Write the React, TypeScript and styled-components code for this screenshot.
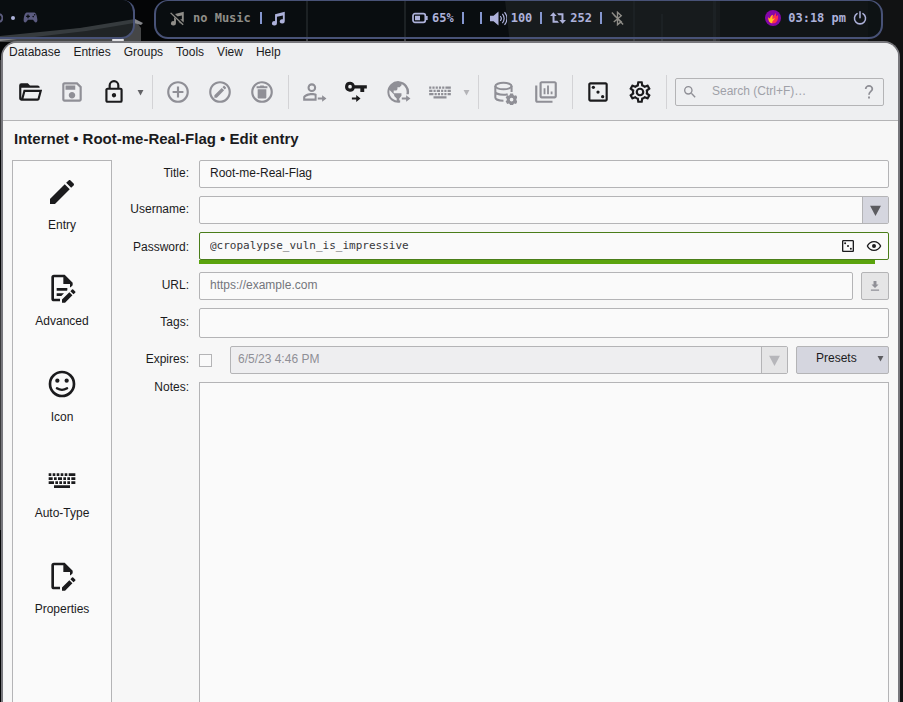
import React, { useState } from "react";
import styled, { createGlobalStyle } from "styled-components";

const ink = "#1b1b1d";
const dim = "#8f8f96";
const line = "#b4b4b6";
const face = "#d5d6df";
const bar = "#eeeff1";
const lilac = "#adb1da";

const Global = createGlobalStyle`
  * { box-sizing: border-box; }
  body {
    margin: 0;
    overflow: hidden;
    background: #0a0b0d;
    color: ${ink};
    font: 12px/16px "Liberation Sans", Arial, sans-serif;
  }
  button, input, textarea { font: inherit; color: inherit; margin: 0; }
`;

/* ---------- icons ---------- */

const ring =
  "M12,20C7.59,20 4,16.41 4,12C4,7.59 7.59,4 12,4C16.41,4 20,7.59 20,12C20,16.41 16.41,20 12,20M12,2A10,10 0 0,0 2,12A10,10 0 0,0 12,22A10,10 0 0,0 22,12A10,10 0 0,0 12,2";
const smallArrow = "M15.5 17.1h4v-2.2l4 3.1-4 3.1v-2.2h-4z";

const icons: Record<string, React.ReactNode> = {
  open: <path d="M6.1,10L4,18V8H21A2,2 0 0,0 19,6H12L10,4H4A2,2 0 0,0 2,6V18A2,2 0 0,0 4,20H19C19.9,20 20.7,19.4 20.9,18.5L23.2,10H6.1M19,18H6L7.6,12H20.6L19,18Z" />,
  save: <path d="M17 3H5C3.89 3 3 3.9 3 5V19C3 20.1 3.89 21 5 21H19C20.1 21 21 20.1 21 19V7L17 3M19 19H5V5H16.17L19 7.83V19M12 12C10.34 12 9 13.34 9 15S10.34 18 12 18 15 16.66 15 15 13.66 12 12 12M6 6H15V10H6V6Z" />,
  lock: <path d="M12,17C10.89,17 10,16.1 10,15C10,13.89 10.89,13 12,13A2,2 0 0,1 14,15A2,2 0 0,1 12,17M18,20V10H6V20H18M18,8A2,2 0 0,1 20,10V20A2,2 0 0,1 18,22H6C4.89,22 4,21.1 4,20V10C4,8.89 4.89,8 6,8H7V6A5,5 0 0,1 12,1A5,5 0 0,1 17,6V8H18M12,3A3,3 0 0,0 9,6V8H15V6A3,3 0 0,0 12,3Z" />,
  add: <path d={ring + "M13,7H11V11H7V13H11V17H13V13H17V11H13V7Z"} />,
  edit: <path d={ring + "M15.7,6.3C15.9,6.3 16.1,6.4 16.2,6.5L17.5,7.8C17.7,8 17.7,8.4 17.5,8.6L16.4,9.7L14.3,7.600L15.3,6.500C15.4,6.400 15.6,6.300 15.7,6.300M13.600,8.200L15.800,10.400L9.100,17.200H6.800V14.900L13.600,8.200Z"} />,
  trash: <path d={ring + "M8 9.5H16V17A1 1 0 0 1 15 18H9A1 1 0 0 1 8 17ZM7 6.8H9.8L10.5 6H13.5L14.2 6.8H17V8.6H7Z"} />,
  user: (
    <>
      <path d="M10 4a4 4 0 1 0 0 8 4 4 0 0 0 0-8m0 1.9a2.1 2.1 0 1 1 0 4.2 2.1 2.1 0 0 1 0-4.2" />
      <path d="M10 13c-2.67 0-8 1.34-8 4v3h12.4v-6.1C13.2 13.3 11.4 13 10 13m0 1.900c.9 0 1.800.1 2.600.4v2.800H3.900V17c0-.64 3.130-2.100 6.100-2.100" fillRule="evenodd" />
      <path d={smallArrow} />
    </>
  ),
  key: (
    <>
      <path d="M6.5 2.500a4.600 4.600 0 1 0 4.300 6.200H16V12h3.600V8.700H22V5.800H10.800A4.600 4.600 0 0 0 6.500 2.500m0 2.900a1.700 1.700 0 1 1 0 3.400 1.700 1.700 0 0 1 0-3.400" />
      <path d="M8.200 17h4v-2.300l4 3.300-4 3.300V19h-4z" />
    </>
  ),
  globe: (
    <>
      <path d="M22 14A10 10 0 1 0 14 21.800V19.700A8 8 0 0 1 4 12c0-.7.100-1.300.2-1.900L8.500 14.500v1.300l2.300 2.200v3h2.400v-3l2-2.500v-2.300H8V10.500h2.500l1-1V7.500h2l1.800-1.800V4.700A8 8 0 0 1 19.700 14z" />
      <path d={smallArrow} />
    </>
  ),
  keyboard: (
    <path d="M2 7h2v2H2zM5 7h2v2H5zM8 7h2v2H8zM11 7h2v2h-2zM14 7h2v2h-2zM17 7h5v2h-5zM2 10h3v2H2zM6 10h2v2H6zM9 10h3v2H9zM13 10h2v2h-2zM16 10h2v2h-2zM19 10h3v2h-3zM2 13h4v2H2zM7 13h2v2H7zM10 13h2v2h-2zM13 13h2v2h-2zM16 13h2v2h-2zM19 13h3v2h-3zM6 16h12v2H6z" />
  ),
  database: (
    <>
      <g fill="none" stroke="currentColor" strokeWidth="1.900">
        <ellipse cx="11.500" cy="6.500" rx="7.500" ry="3" />
        <path d="M4 6.500v10.500c0 1.700 3.300 3 7.500 3M19 6.500v5.500M4 11.500c0 1.700 3.300 3 7.500 3 1.500 0 2.800-.2 3.900-.5" />
      </g>
      <path fillRule="evenodd" d="M17.600 13.300h2.800l.3 1.500 1 .6 1.400-.5 1.400 2.400-1.100 1v1.300l1.100 1-1.400 2.400-1.400-.5-1 .6-.3 1.500h-2.800l-.3-1.500-1-.6-1.400.5-1.400-2.400 1.100-1v-1.300l-1.100-1 1.400-2.400 1.400.5 1-.6zM19 17.300a1.700 1.700 0 1 0 0 3.400 1.700 1.700 0 0 0 0-3.400" />
    </>
  ),
  reports: (
    <path d="M20 2H8C6.900 2 6 2.900 6 4V16C6 17.100 6.900 18 8 18H20C21.100 18 22 17.100 22 16V4C22 2.900 21.100 2 20 2M20 16H8V4H20V16M4 6H2V20C2 21.100 2.900 22 4 22H18V20H4V6M9.800 8.500H11.500V14H9.800ZM13 6H14.700V14H13ZM16.300 11.500H18V14H16.300Z" />
  ),
  dice: (
    <>
      <path d="M19 5V19H5V5H19M19 3H5C3.900 3 3 3.900 3 5V19C3 20.100 3.900 21 5 21H19C20.100 21 21 20.100 21 19V5C21 3.900 20.100 3 19 3" />
      <circle cx="7.700" cy="7.700" r="1.500" />
      <circle cx="12" cy="12" r="1.500" />
      <circle cx="16.300" cy="16.300" r="1.500" />
    </>
  ),
  settings: (
    <path d="M12,8A4,4 0 0,1 16,12A4,4 0 0,1 12,16A4,4 0 0,1 8,12A4,4 0 0,1 12,8M12,10A2,2 0 0,0 10,12A2,2 0 0,0 12,14A2,2 0 0,0 14,12A2,2 0 0,0 12,10M10,22C9.75,22 9.54,21.82 9.5,21.58L9.13,18.93C8.5,18.68 7.96,18.34 7.44,17.94L4.95,18.95C4.73,19.03 4.46,18.95 4.34,18.73L2.34,15.27C2.21,15.05 2.27,14.78 2.46,14.63L4.57,12.97L4.5,12L4.57,11L2.46,9.37C2.27,9.22 2.21,8.95 2.34,8.73L4.34,5.27C4.46,5.05 4.73,4.96 4.95,5.05L7.44,6.05C7.96,5.66 8.5,5.32 9.13,5.07L9.5,2.42C9.54,2.18 9.75,2 10,2H14C14.25,2 14.46,2.18 14.5,2.42L14.87,5.07C15.5,5.32 16.04,5.66 16.56,6.05L19.05,5.05C19.27,4.96 19.54,5.05 19.66,5.27L21.66,8.73C21.79,8.95 21.73,9.22 21.54,9.37L19.43,11L19.5,12L19.43,13L21.54,14.63C21.73,14.78 21.79,15.05 21.66,15.27L19.66,18.73C19.54,18.95 19.27,19.04 19.05,18.95L16.56,17.95C16.04,18.34 15.5,18.68 14.87,18.93L14.5,21.58C14.46,21.82 14.25,22 14,22H10M11.25,4L10.88,6.61C9.68,6.86 8.62,7.5 7.85,8.39L5.44,7.35L4.69,8.65L6.8,10.2C6.4,11.37 6.4,12.64 6.8,13.8L4.68,15.36L5.43,16.66L7.86,15.62C8.63,16.5 9.68,17.14 10.87,17.38L11.24,20H12.76L13.13,17.39C14.32,17.14 15.37,16.5 16.14,15.62L18.57,16.66L19.32,15.36L17.2,13.81C17.6,12.64 17.6,11.37 17.2,10.2L19.31,8.65L18.56,7.35L16.15,8.39C15.38,7.5 14.32,6.86 13.12,6.62L12.75,4H11.25Z" />
  ),
  search: <path d="M9.5,3A6.5,6.5 0 0,1 16,9.5C16,11.11 15.41,12.59 14.44,13.73L14.71,14H15.5L20.5,19L19,20.5L14,15.5V14.71L13.73,14.44C12.59,15.41 11.11,16 9.5,16A6.5,6.5 0 0,1 3,9.5A6.5,6.5 0 0,1 9.5,3M9.5,5C7,5 5,7 5,9.5C5,12 7,14 9.5,14C12,14 14,12 14,9.5C14,7 12,5 9.5,5Z" />,
  help: (
    <>
      <path d="M7 7.500a5 4.700 0 1 1 10 0c0 3.500-5 4-5 8.500" fill="none" stroke="currentColor" strokeWidth="2.600" />
      <path d="M10.600 18.800h2.800v2.800h-2.800z" />
    </>
  ),
  pencil: <path d="M20.71,7.04C21.1,6.65 21.1,6 20.71,5.63L18.37,3.29C18,2.9 17.35,2.9 16.96,3.29L15.12,5.12L18.87,8.87M3,17.25V21H6.75L17.81,9.93L14.06,6.18L3,17.25Z" />,
  document: (
    <>
      <path d="M6 2a2 2 0 0 0-2 2v16a2 2 0 0 0 2 2h4.500v-2H6V4h7v5h5v2.500h.5L20 10V8l-6-6z" />
      <path d="M8 12h8v1.600l-.4.400H8zM8 16h5.500l-2 2H8z" />
      <path d="M12 20.700V23h2.300l5.500-5.500-2.300-2.300zM18.300 14.400l2.300 2.300 1.300-1.200a.6.600 0 0 0 0-.9l-1.500-1.500a.6.600 0 0 0-.9 0z" />
    </>
  ),
  properties: (
    <>
      <path d="M6 2a2 2 0 0 0-2 2v16a2 2 0 0 0 2 2h4.500v-2H6V4h7v5h5v2.500h.5L20 10V8l-6-6z" />
      <path d="M12 20.700V23h2.300l5.500-5.500-2.300-2.300zM18.300 14.400l2.300 2.300 1.300-1.200a.6.600 0 0 0 0-.9l-1.500-1.500a.6.600 0 0 0-.9 0z" />
    </>
  ),
  smile: (
    <>
      <path d={ring} />
      <circle cx="8.500" cy="9.500" r="1.600" />
      <circle cx="15.500" cy="9.500" r="1.600" />
      <path d="M8.200 15.200q3.800 2.400 7.600 0" fill="none" stroke="currentColor" strokeWidth="1.800" strokeLinecap="round" />
    </>
  ),
  eye: <path d="M12,9A3,3 0 0,1 15,12A3,3 0 0,1 12,15A3,3 0 0,1 9,12A3,3 0 0,1 12,9M12,4.5C17,4.5 21.27,7.61 23,12C21.27,16.39 17,19.5 12,19.5C7,19.5 2.73,16.39 1,12C2.73,7.61 7,4.5 12,4.5M3.18,12C4.83,15.36 8.24,17.5 12,17.5C15.76,17.5 19.17,15.36 20.82,12C19.17,8.64 15.76,6.5 12,6.5C8.24,6.5 4.83,8.64 3.18,12Z" />,
  download: <path d="M18 9.500h-3.500V3.500h-5v6H6l6 6zM5 18v2h14v-2z" />,
  down: <path d="M2 3h20L12 22z" />,
  note: <path d="M22 1v15.500a4 3.500 0 1 1-3-3.300V7L9.500 9.200v10.300a4 3.500 0 1 1-3-3.300V5z" />,
  noteOff: (
    <>
      <path d="M22 1v15.500a4 3.500 0 1 1-3-3.300V7L9.500 9.200v10.300a4 3.500 0 1 1-3-3.300V5z" />
      <path d="M2 2l20 20" stroke="#0d1013" strokeWidth="4.500" />
      <path d="M1 3l20 19" stroke="currentColor" strokeWidth="2.200" />
    </>
  ),
  battery: (
    <>
      <rect x="1.500" y="5.500" width="18.500" height="13" rx="3" fill="none" stroke="currentColor" strokeWidth="2.600" />
      <path d="M4.500 8.500h7.500v7H4.500zM20.500 9h3v6h-3z" />
    </>
  ),
  volume: (
    <>
      <path d="M0 8h5l7-6v20l-7-6H0z" />
      <path d="M14.500 8.500q3 3.500 0 7M17.500 5.500q5 6.500 0 13M20.500 3q7 9 0 18" fill="none" stroke="currentColor" strokeWidth="1.700" />
    </>
  ),
  loop: <path d="M5 3.500l5 5.500H6.800v7H11l2.500 3H3.800V9H0zM19 20.500L14 15h3.200V8H13l-2.500-3h9.700v10H24z" />,
  bluetoothOff: (
    <path d="M6 6.500l12 10.500-6 5V2l6 5.500L6 17.500M3 2.500l18 19" fill="none" stroke="currentColor" strokeWidth="2.200" />
  ),
  power: (
    <path d="M7 4.500a9.500 9.500 0 1 0 10 0M12 1.500v10" fill="none" stroke="currentColor" strokeWidth="2.600" strokeLinecap="round" />
  ),
  gamepad: (
    <path fillRule="evenodd" d="M6 4h12c3 0 4.500 6 5 12 .2 4-3 5-4.800 2.500L16 15.500H8l-2.200 3C4 21 .8 20 1 16 1.500 10 3 4 6 4M7 7v2H5v2h2v2h2v-2h2V9H9V7zM15 10.500a1.300 1.300 0 1 0 2.600 0 1.300 1.300 0 0 0-2.600 0M17.500 7.700a1.200 1.200 0 1 0 2.400 0 1.200 1.200 0 0 0-2.400 0" />
  ),
  flame: (
    <>
      <circle cx="12" cy="12" r="12" fill="#8606a8" />
      <path d="M5 11c0 8 4 9 7.500 9 4 0 8-4 7-13-1 1.500-2 2-3 2.500.5-2.500 0-4-1-5-.5 3-3 4-4.500 7-.5-1.500 0-3 .5-4.500-3 1.500-4 3.500-4 6-1-.5-2-1-2.500-2" fill="#ff2e4d" />
      <path d="M5 11c0 7 3 9 6 9-1-3 2-4 4-8-2 1-3.500 1-4 2 0-2.500.5-4.500 1-7-3 1.500-4 3.500-4.500 6-1-.5-2-1-2.500-2" fill="#ffc01e" />
    </>
  ),
};

const Svg = styled.svg`
  display: block;
  flex: none;
  fill: currentColor;
`;

function Icon({ name, size = 26 }: { name: string; size?: number }) {
  return (
    <Svg width={size} height={size} viewBox="0 0 24 24" aria-hidden="true">
      {icons[name]}
    </Svg>
  );
}

/* ---------- desktop ---------- */

const Desktop = styled.div`
  position: relative;
  display: flex;
  flex-direction: column;
  height: 100vh;
`;

const Wallpaper = styled.svg`
  position: absolute;
  inset: 0;
  width: 100%;
  height: 100%;
`;

const StatusBar = styled.header`
  position: relative;
  display: grid;
  grid-template-columns: 135px 1fr;
  column-gap: 19px;
  height: 39px;
  margin: 0 20px 2px 0;
  color: ${lilac};
  font: bold 12px/16px "DejaVu Sans Mono", monospace;
`;

const Pill = styled.div<{ $left?: boolean }>`
  display: ${(p) => (p.$left ? "flex" : "grid")};
  grid-template-columns: 1fr auto 1fr;
  align-items: center;
  gap: 8px;
  padding: ${(p) => (p.$left ? "0 0 2px" : "0 14px 2px")};
  border: 2px solid #485277;
  border-width: ${(p) => (p.$left ? "0 2px 2px 0" : "1px 2px 2px")};
  border-radius: ${(p) => (p.$left ? "0 12px 14px 0" : "14px")};
  background: rgba(13, 18, 22, 0.65);
`;

const StatusGroup = styled.div<{ $end?: boolean; $gap?: number }>`
  display: flex;
  align-items: center;
  justify-content: ${(p) => (p.$end ? "flex-end" : "flex-start")};
  gap: ${(p) => p.$gap ?? 7}px;
`;

const Status = styled.span<{ $tone?: string }>`
  display: flex;
  align-items: center;
  gap: 4px;
  color: ${(p) => p.$tone ?? "inherit"};
`;

const Tick = styled.span`
  width: 2px;
  height: 12px;
  margin: 0 1px;
  background: #8596cf;
`;

const BarButton = styled.button`
  padding: 0;
  border: 0;
  background: none;
  color: inherit;
`;

/* ---------- application window ---------- */

const Window = styled.div`
  position: relative;
  flex: 1;
  min-height: 0;
  display: flex;
  flex-direction: column;
  margin: 0 3px 0 1px;
  border: 2px solid #77777c;
  border-bottom: 0;
  border-radius: 16px 16px 0 0;
  background: #f7f7f7;
  overflow: hidden;
`;

const Menu = styled.nav`
  display: flex;
  gap: 13px;
  padding: 1px 6px 4px;
  background: ${bar};
`;

const MenuItem = styled.button`
  padding: 0;
  border: 0;
  background: none;
`;

const Toolbar = styled.div`
  display: flex;
  align-items: center;
  height: 57px;
  padding: 0 14px 0 6px;
  border-bottom: 1px solid ${line};
  background: ${bar};
`;

const ToolButton = styled.button<{ $off?: boolean }>`
  display: flex;
  align-items: center;
  height: 42px;
  padding: 0 8px;
  border: 0;
  background: none;
  color: ${(p) => (p.$off ? dim : ink)};
`;

const MenuArrow = styled.button<{ $off?: boolean }>`
  display: flex;
  justify-content: flex-start;
  width: 12px;
  padding: 0 2px;
  border: 0;
  background: none;
  color: ${(p) => (p.$off ? "#b4b4b8" : "#626266")};
`;

const Separator = styled.span`
  width: 1px;
  height: 34px;
  margin: 0 4px 0 5px;
  background: #d3d3d6;
`;

const SearchBox = styled.label`
  flex: 1;
  min-width: 0;
  display: flex;
  align-items: center;
  height: 28px;
  margin-left: 4px;
  padding: 0 6px;
  border: 1px solid ${line};
  border-radius: 2px;
  color: ${dim};
`;

const SearchInput = styled.input`
  flex: 1;
  min-width: 0;
  padding: 0 0 2px;
  margin-left: 14px;
  border: 0;
  outline: 0;
  background: none;
  color: ${ink};
  &::placeholder { color: #9fa1a8; opacity: 1; }
`;

const Heading = styled.h1`
  margin: 0;
  padding: 8px 11px 11px;
  font-size: 15px;
  line-height: 20px;
`;

const Main = styled.main`
  flex: 1;
  min-height: 0;
  display: grid;
  grid-template-columns: 100px 1fr;
  column-gap: 16px;
  padding: 0 9px;
`;

const Tabs = styled.nav`
  border: 1px solid ${line};
  border-bottom: 0;
  background: #fafafa;
`;

const Tab = styled.button`
  display: flex;
  flex-direction: column;
  align-items: center;
  gap: 9px;
  width: 100%;
  height: 96px;
  padding: 15px 0 0;
  border: 0;
  background: none;
`;

const Form = styled.form`
  display: grid;
  grid-template-columns: 61px minmax(0, 1fr);
  grid-template-rows: repeat(6, auto) 1fr;
  gap: 8px 10px;
  min-height: 0;
`;

const Label = styled.label<{ $top?: number }>`
  margin-top: ${(p) => p.$top ?? 5}px;
  text-align: right;
`;

const Line = styled.div`
  display: flex;
  align-items: center;
  gap: 8px;
`;

const Box = styled.div<{ $tone?: "good" | "off"; $tall?: boolean }>`
  flex: 1;
  min-width: 0;
  display: flex;
  align-items: stretch;
  height: ${(p) => (p.$tall ? 30 : 28)}px;
  border: 1px solid ${(p) => (p.$tone === "good" ? "#4a7d1a" : line)};
  border-radius: 2px;
  background: ${(p) => (p.$tone === "off" ? "#eeeef0" : "#fafafa")};
`;

const TextInput = styled.input<{ $mono?: boolean }>`
  flex: 1;
  min-width: 0;
  padding: ${(p) => (p.$mono ? "0 10px" : "0 10px 2px")};
  border: 0;
  outline: 0;
  background: none;
  ${(p) => p.$mono && 'color: #38383b; font: 11px/16px "DejaVu Sans Mono", monospace;'}
  &::placeholder { color: #74767c; opacity: 1; }
  &:disabled { color: ${dim}; padding-left: 7px; }
`;

const DropButton = styled.button`
  display: grid;
  place-items: center;
  width: 26px;
  padding: 0;
  border: 0;
  border-left: 1px solid ${line};
  background: ${face};
  color: #5c5c60;
  &:disabled { background: #e5e5e6; color: #b6b6ba; }
`;

const InlineButton = styled.button`
  display: grid;
  place-items: center;
  width: 26px;
  padding: 0;
  border: 0;
  background: none;
  &:last-child { margin-right: 1px; }
`;

const Strength = styled.div`
  display: flex;
  height: 4px;
`;

const StrengthFill = styled.div`
  background: #5aa30d;
`;

const SquareButton = styled.button`
  display: grid;
  place-items: center;
  width: 28px;
  height: 28px;
  padding: 0;
  border: 1px solid ${line};
  border-radius: 2px;
  background: #e5e5e6;
  color: ${dim};
`;

const Check = styled.input`
  appearance: none;
  width: 13px;
  height: 13px;
  border: 1px solid ${line};
  background: #fafafa;
  && { margin-right: 10px; }
  &:checked { background: #5aa30d; }
`;

const PresetButton = styled.button`
  display: flex;
  align-items: center;
  justify-content: space-between;
  width: 93px;
  height: 28px;
  padding: 0 4px 4px 19px;
  border: 1px solid ${line};
  border-radius: 2px;
  background: ${face};
  svg { color: #5c5c60; }
`;

const Notes = styled.textarea`
  width: 100%;
  height: 100%;
  padding: 6px 10px;
  border: 1px solid ${line};
  border-bottom: 0;
  outline: 0;
  resize: none;
  background: #fafafa;
`;

const menus = ["Database", "Entries", "Groups", "Tools", "View", "Help"];

type Tool = { icon: string; label: string; off?: boolean; menu?: boolean };
const tools: Tool[][] = [
  [
    { icon: "open", label: "Open database" },
    { icon: "save", label: "Save database", off: true },
    { icon: "lock", label: "Lock database", menu: true },
  ],
  [
    { icon: "add", label: "New entry", off: true },
    { icon: "edit", label: "Edit entry", off: true },
    { icon: "trash", label: "Delete entry", off: true },
  ],
  [
    { icon: "user", label: "Copy username", off: true },
    { icon: "key", label: "Copy password" },
    { icon: "globe", label: "Copy URL", off: true },
    { icon: "keyboard", label: "Perform Auto-Type", off: true, menu: true },
  ],
  [
    { icon: "database", label: "Database settings", off: true },
    { icon: "reports", label: "Database reports", off: true },
  ],
  [
    { icon: "dice", label: "Password generator" },
    { icon: "settings", label: "Settings" },
  ],
];

const tabs = [
  { icon: "pencil", label: "Entry" },
  { icon: "document", label: "Advanced" },
  { icon: "smile", label: "Icon" },
  { icon: "keyboard", label: "Auto-Type" },
  { icon: "properties", label: "Properties" },
];

export default function App() {
  const [title, setTitle] = useState("Root-me-Real-Flag");
  const [password, setPassword] = useState("@cropalypse_vuln_is_impressive");
  const strength = 98;

  return (
    <>
      <Global />
      <Desktop>
        <Wallpaper aria-hidden="true">
          <rect width="100%" height="100%" fill="#040506" />
          <path d="M505 0h398v44H510z" fill="#2b2c2d" />
          <path d="M720 0h183v44H720z" fill="#1a1b1b" />
          <path d="M868 0h35v702h-35z" fill="#111213" />
          <path d="M0 38L90 27l45-7 6 8v14H0z" fill="#454647" />
          <path d="M0 36L80 28l55-9 8 4-2 2-7-2-48 8-86 10z" fill="#85868a" />
          <ellipse cx="118" cy="40" rx="6" ry="3" fill="#e2e2e5" />
          <path d="M306 0h2v44h-2zM404 0h2v44h-2zM661 14h2v30h-2zM713 0h3v44h-3zM633 0h2v44h-2z" fill="#3b3d40" />
          <path d="M0 60h2v90H0zM0 290h2v240H0z" fill="#3b3b3d" />
        </Wallpaper>

        <StatusBar>
          <Pill $left>
            <Status $tone="#5b5b7d">
              <Svg width="3" height="14" viewBox="0 0 3 14" aria-hidden="true">
                <path d="M0 3q5 4 0 8" fill="none" stroke="currentColor" strokeWidth="2" />
              </Svg>
            </Status>
            <Svg width="4" height="4" viewBox="0 0 4 4" aria-hidden="true">
              <circle cx="2" cy="2" r="2" />
            </Svg>
            <Status $tone="#5b5b80">
              <Icon name="gamepad" size={15} />
            </Status>
          </Pill>
          <Pill>
            <StatusGroup $gap={8}>
              <Status $tone="#8f8d88">
                <Icon name="noteOff" size={15} />
              </Status>
              <Status $tone="#8f8d88">no Music</Status>
              <Tick />
              <Icon name="note" size={15} />
            </StatusGroup>
            <StatusGroup>
              <Status>
                <Icon name="battery" size={16} />
                65%
              </Status>
              <Tick />
              <Status />
              <Tick />
              <Status>
                <Icon name="volume" size={17} />
                100
              </Status>
              <Tick />
              <Status>
                <Icon name="loop" size={16} />
                252
              </Status>
              <Tick />
              <Status $tone="#8f8d88">
                <Icon name="bluetoothOff" size={15} />
              </Status>
            </StatusGroup>
            <StatusGroup $end>
              <Icon name="flame" size={16} />
              03:18 pm
              <BarButton aria-label="Power">
                <Icon name="power" size={14} />
              </BarButton>
            </StatusGroup>
          </Pill>
        </StatusBar>

        <Window>
          <Menu>
            {menus.map((m) => (
              <MenuItem key={m}>{m}</MenuItem>
            ))}
          </Menu>

          <Toolbar role="toolbar">
            {tools.map((group) => (
              <React.Fragment key={group[0].icon}>
                {group.map((t) => (
                  <React.Fragment key={t.icon}>
                    <ToolButton $off={t.off} aria-label={t.label}>
                      <Icon name={t.icon} />
                    </ToolButton>
                    {t.menu && (
                      <MenuArrow $off={t.off} aria-label={t.label + " options"}>
                        <Icon name="down" size={7} />
                      </MenuArrow>
                    )}
                  </React.Fragment>
                ))}
                <Separator />
              </React.Fragment>
            ))}
            <SearchBox>
              <Icon name="search" size={16} />
              <SearchInput type="text" aria-label="Search" placeholder="Search (Ctrl+F)…" />
              <Icon name="help" size={16} />
            </SearchBox>
          </Toolbar>

          <Heading>Internet • {title} • Edit entry</Heading>

          <Main>
            <Tabs>
              {tabs.map((t) => (
                <Tab key={t.label}>
                  <Icon name={t.icon} size={32} />
                  {t.label}
                </Tab>
              ))}
            </Tabs>

            <Form onSubmit={(e) => e.preventDefault()}>
              <Label htmlFor="title">Title:</Label>
              <Box>
                <TextInput id="title" value={title} onChange={(e) => setTitle(e.target.value)} />
              </Box>

              <Label htmlFor="username">Username:</Label>
              <Box>
                <TextInput id="username" />
                <DropButton type="button" aria-label="Choose username">
                  <Icon name="down" size={13} />
                </DropButton>
              </Box>

              <Label htmlFor="password" $top={7}>Password:</Label>
              <div>
                <Box $tone="good">
                  <TextInput id="password" $mono spellCheck={false} value={password} onChange={(e) => setPassword(e.target.value)} />
                  <InlineButton type="button" aria-label="Generate password">
                    <Icon name="dice" size={16} />
                  </InlineButton>
                  <InlineButton type="button" aria-label="Toggle password">
                    <Icon name="eye" size={16} />
                  </InlineButton>
                </Box>
                <Strength role="meter" aria-label="Password strength" aria-valuenow={strength}>
                  <StrengthFill style={{ width: `${strength}%` }} />
                </Strength>
              </div>

              <Label htmlFor="url">URL:</Label>
              <Line>
                <Box>
                  <TextInput id="url" placeholder="https://example.com" />
                </Box>
                <SquareButton type="button" aria-label="Download favicon">
                  <Icon name="download" size={14} />
                </SquareButton>
              </Line>

              <Label htmlFor="tags" $top={6}>Tags:</Label>
              <Box $tall>
                <TextInput id="tags" />
              </Box>

              <Label htmlFor="expires">Expires:</Label>
              <Line>
                <Check id="expires" type="checkbox" />
                <Box $tone="off">
                  <TextInput aria-label="Expiry date" disabled defaultValue="6/5/23 4:46 PM" />
                  <DropButton type="button" disabled aria-label="Choose date">
                    <Icon name="down" size={13} />
                  </DropButton>
                </Box>
                <PresetButton type="button">
                  Presets
                  <Icon name="down" size={7} />
                </PresetButton>
              </Line>

              <Label $top={-3} htmlFor="notes">Notes:</Label>
              <Notes id="notes" />
            </Form>
          </Main>
        </Window>
      </Desktop>
    </>
  );
}
